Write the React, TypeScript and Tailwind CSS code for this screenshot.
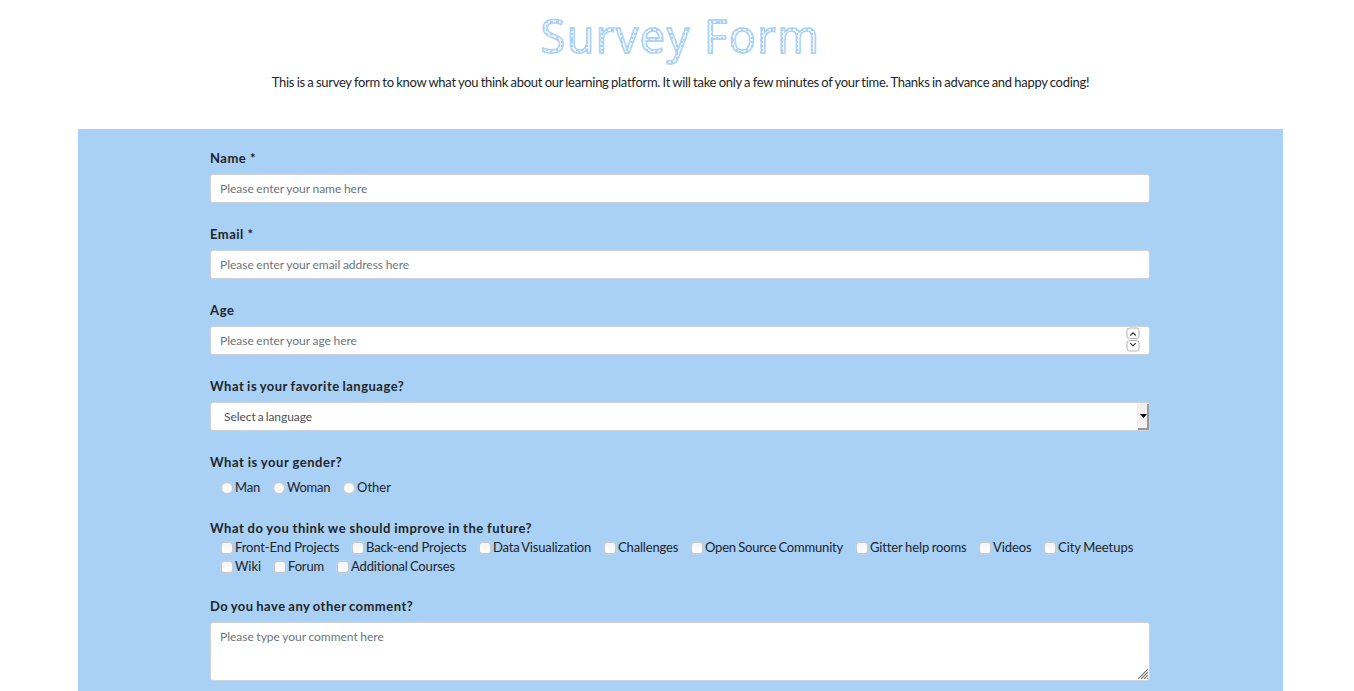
import React from "react";

const fieldClass =
  "block h-[29px] w-full appearance-none rounded-[3px] border border-[#ced4da] bg-white px-[9px] pb-px text-[12px] tracking-[-0.02px] [word-spacing:-0.4px] text-[#495057] placeholder:text-[#6c757d] placeholder:opacity-100 outline-none";

function Label({ children, className }: { children: React.ReactNode; className: string }) {
  return (
    <div className="flex h-[19px] items-center">
      <span className={`whitespace-nowrap text-[13px] leading-[19px] font-bold ${className}`}>{children}</span>
    </div>
  );
}

function Option({ type, label, className }: { type: "radio" | "checkbox"; label: string; className: string }) {
  const shape = type === "radio" ? "rounded-full" : "rounded-[3px]";
  return (
    <label className={`flex h-[19px] shrink-0 items-center whitespace-nowrap ${className}`}>
      <input
        type={type}
        name={type === "radio" ? "gender" : label}
        className={`mt-px mr-[2px] h-[12px] w-[12px] shrink-0 appearance-none border border-[#c6c9cc] bg-linear-to-b from-[#f4f4f4] to-white shadow-[0_0_0_0.5px_#c8d4df] ${shape}`}
      />
      <span className="text-[13px] leading-[19px]">{label}</span>
    </label>
  );
}

function Spinner() {
  return (
    <svg className="absolute top-px right-[10px]" width="14" height="26" viewBox="0 0 14 26" fill="none">
      <rect x="1" y="1" width="12" height="10.5" rx="2.5" fill="#fff" stroke="#b3b3b3" />
      <rect x="1" y="13.5" width="12" height="10.5" rx="2.5" fill="#fff" stroke="#b3b3b3" />
      <path d="M4.3 8.5 7 5.8l2.7 2.7M4.3 16.2 7 18.9l2.7-2.7" stroke="#333" strokeWidth="1.2" />
    </svg>
  );
}

export default function App() {
  return (
    <main className="h-[691px] overflow-hidden bg-white font-['Lato',sans-serif] text-[#212529]">
      <div className="ml-[78px] w-[1205px]">
        <header className="flex h-[129px] flex-col items-center">
          <h1 className="mt-[6px] h-[61px] text-center text-[45px] leading-[60px] font-normal tracking-[1.55px] whitespace-nowrap font-['Open_Sans',sans-serif]">
            <span className="bg-[radial-gradient(circle_at_2px_1px,#a9d1f7_0.8px,transparent_1.3px),radial-gradient(circle_at_4px_5px,#a9d1f7_0.7px,#f2f9ff_1.2px)] bg-[length:5px_4px,7px_6px] bg-clip-text text-transparent [-webkit-text-stroke:1.4px_#a9d1f7]">
              Survey Form
            </span>
          </h1>
          <p className="mt-[5px] text-[13px] leading-[20px] tracking-[-0.28px] whitespace-nowrap [word-spacing:-0.6px]">
            This is a survey form to know what you think about our learning platform. It will take only a few minutes of your time. Thanks in advance and happy coding!
          </p>
        </header>
        <form className="h-[700px] bg-[#a9d0f5] pt-[20px] pr-[133px] pl-[132px]">
          <div className="h-[76px]">
            <Label className="tracking-[0.5px]">Name *</Label>
            <input className={`${fieldClass} mt-[6px]`} placeholder="Please enter your name here" />
          </div>
          <div className="h-[76px]">
            <Label className="tracking-[0.5px]">Email *</Label>
            <input className={`${fieldClass} mt-[6px]`} placeholder="Please enter your email address here" />
          </div>
          <div className="h-[76px]">
            <Label className="tracking-[0.6px]">Age</Label>
            <div className="relative mt-[6px]">
              <input className={fieldClass} placeholder="Please enter your age here" />
              <Spinner />
            </div>
          </div>
          <div className="h-[76px]">
            <Label className="tracking-[0.5px] [word-spacing:-0.8px]">What is your favorite language?</Label>
            <div className="mt-[6px] flex h-[29px] items-center justify-between rounded-[3px] border border-[#ced4da] bg-white pl-[13px] text-[12px] text-[#495057]">
              <span className="tracking-[-0.05px] [word-spacing:-1px]">Select a language</span>
              <svg width="12" height="27" viewBox="0 0 12 27">
                <path d="M0 0h12v27H0z" fill="#f0f0ef" />
                <path d="M11 1v25H1" fill="none" stroke="#999" strokeWidth="2" />
                <path d="M3 11h7l-3.5 4z" fill="#000" />
              </svg>
            </div>
          </div>
          <div className="h-[66px]">
            <Label className="tracking-[0.55px] [word-spacing:-0.4px]">What is your gender?</Label>
            <div className="mt-[6px] flex pl-[11px]">
              <Option type="radio" label="Man" className="w-[52px] tracking-[-0.2px]" />
              <Option type="radio" label="Woman" className="w-[70px] tracking-[-0.25px]" />
              <Option type="radio" label="Other" className="w-[70px]" />
            </div>
          </div>
          <div className="h-[78px]">
            <Label className="tracking-[0.53px] [word-spacing:-0.5px]">What do you think we should improve in the future?</Label>
            <div className="flex pl-[11px]">
              <Option type="checkbox" label="Front-End Projects" className="w-[131px] tracking-[-0.12px]" />
              <Option type="checkbox" label="Back-end Projects" className="w-[127px] tracking-[-0.14px]" />
              <Option type="checkbox" label="Data Visualization" className="w-[125px] tracking-[-0.17px] [word-spacing:-1px]" />
              <Option type="checkbox" label="Challenges" className="w-[87px] tracking-[-0.15px]" />
              <Option type="checkbox" label="Open Source Community" className="w-[165px] tracking-[-0.19px] [word-spacing:-0.8px]" />
              <Option type="checkbox" label="Gitter help rooms" className="w-[123px] tracking-[-0.12px] [word-spacing:-0.6px]" />
              <Option type="checkbox" label="Videos" className="w-[65px] tracking-[-0.08px]" />
              <Option type="checkbox" label="City Meetups" className="w-[91px] tracking-[-0.04px] [word-spacing:-0.8px]" />
            </div>
            <div className="flex pl-[11px]">
              <Option type="checkbox" label="Wiki" className="w-[53px] tracking-[-0.05px]" />
              <Option type="checkbox" label="Forum" className="w-[63px] tracking-[-0.15px]" />
              <Option type="checkbox" label="Additional Courses" className="w-[130px] tracking-[-0.15px] [word-spacing:-1px]" />
            </div>
          </div>
          <Label className="tracking-[0.48px] [word-spacing:-0.9px]">Do you have any other comment?</Label>
          <div className="relative mt-[6px]">
            <textarea
              className="block h-[59px] w-full resize-none rounded-[3px] border border-[#ced4da] bg-white px-[9px] py-[5px] text-[12px] leading-[18px] tracking-[-0.02px] outline-none [word-spacing:-0.4px] placeholder:text-[#6c757d] placeholder:opacity-100"
              placeholder="Please type your comment here"
            />
            <svg className="absolute right-[2px] bottom-[2px]" width="10" height="10" viewBox="0 0 10 10" fill="none">
              <path d="M0 10 10 0M3 10l7-7M6 10l4-4M9 10l1-1" stroke="#777" strokeWidth="1.1" />
            </svg>
          </div>
        </form>
      </div>
    </main>
  );
}
